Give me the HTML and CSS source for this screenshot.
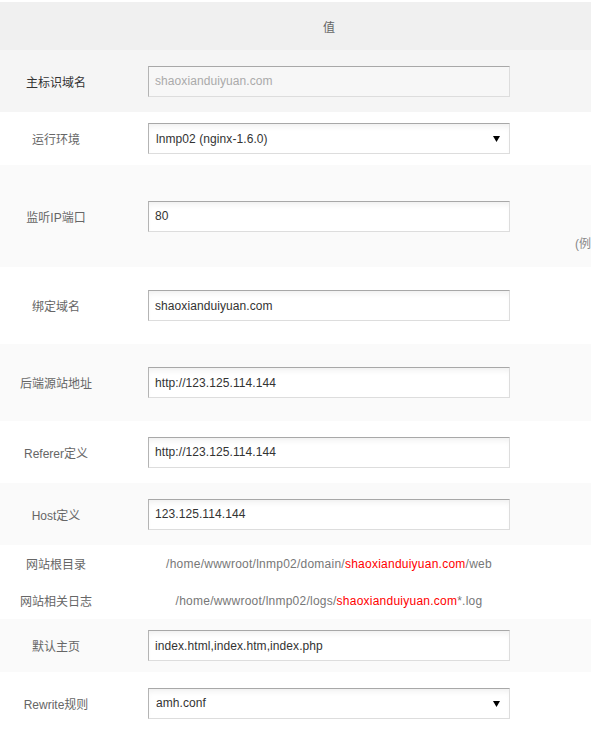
FILE: index.html
```html
<!DOCTYPE html>
<html lang="zh-CN">
<head>
<meta charset="utf-8">
<title>站点配置</title>
<link rel="stylesheet" href="styles.css">
</head>
<body>
<table class="conf">
  <colgroup>
    <col class="c-name">
    <col class="c-val">
    <col class="c-note">
  </colgroup>
  <thead>
    <tr class="head">
      <th></th>
      <th>值</th>
      <th></th>
    </tr>
  </thead>
  <tbody>
    <tr class="h62 bg-main">
      <td class="name strong">主标识域名</td>
      <td class="val"><input class="field field-off" type="text" value="shaoxianduiyuan.com" readonly></td>
      <td class="note"></td>
    </tr>
    <tr class="h53">
      <td class="name">运行环境</td>
      <td class="val">
        <span class="sel">
          <select class="field field-sel"><option>lnmp02 (nginx-1.6.0)</option></select>
          <svg class="arrow" width="7" height="6" viewBox="0 0 7 6"><path d="M0 0H7L3.5 6Z" fill="#000"/></svg>
        </span>
      </td>
      <td class="note"></td>
    </tr>
    <tr class="h102 bg-alt">
      <td class="name">监听IP端口</td>
      <td class="val"><input class="field" type="text" value="80"></td>
      <td class="note note-low">(例</td>
    </tr>
    <tr class="h77">
      <td class="name">绑定域名</td>
      <td class="val"><input class="field" type="text" value="shaoxianduiyuan.com"></td>
      <td class="note"></td>
    </tr>
    <tr class="h77 bg-alt">
      <td class="name">后端源站地址</td>
      <td class="val"><input class="field" type="text" value="http://123.125.114.144"></td>
      <td class="note"></td>
    </tr>
    <tr class="h62">
      <td class="name">Referer定义</td>
      <td class="val"><input class="field" type="text" value="http://123.125.114.144"></td>
      <td class="note"></td>
    </tr>
    <tr class="h62 bg-alt">
      <td class="name">Host定义</td>
      <td class="val"><input class="field" type="text" value="123.125.114.144"></td>
      <td class="note"></td>
    </tr>
    <tr class="h37">
      <td class="name">网站根目录</td>
      <td class="val path">/home/wwwroot/lnmp02/domain/<span class="hl">shaoxianduiyuan.com</span>/web</td>
      <td class="note"></td>
    </tr>
    <tr class="h37">
      <td class="name">网站相关日志</td>
      <td class="val path">/home/wwwroot/lnmp02/logs/<span class="hl">shaoxianduiyuan.com</span>*.log</td>
      <td class="note"></td>
    </tr>
    <tr class="h53 bg-alt">
      <td class="name">默认主页</td>
      <td class="val"><input class="field" type="text" value="index.html,index.htm,index.php"></td>
      <td class="note"></td>
    </tr>
    <tr class="h62">
      <td class="name">Rewrite规则</td>
      <td class="val">
        <span class="sel">
          <select class="field field-sel"><option>amh.conf</option></select>
          <svg class="arrow" width="7" height="6" viewBox="0 0 7 6"><path d="M0 0H7L3.5 6Z" fill="#000"/></svg>
        </span>
      </td>
      <td class="note"></td>
    </tr>
  </tbody>
</table>
</body>
</html>
```

FILE: styles.css
```css
html, body {
  margin: 0;
  padding: 0;
  background: #fff;
  overflow: hidden;
}

body {
  font-family: "Liberation Sans", Arial, "Noto Sans CJK SC", sans-serif;
  font-size: 12px;
  color: #666;
}

.conf {
  margin-top: 2px;
  width: 760px;
  table-layout: fixed;
  border-collapse: collapse;
  border-spacing: 0;
}

.c-name { width: 112px; }
.c-val { width: 434px; }
.c-note { width: 214px; }

.conf th,
.conf td {
  padding: 0;
  text-align: center;
  vertical-align: middle;
}

.head {
  height: 48px;
  background: #f0f0f0;
}

.head th {
  font-weight: normal;
  color: #666;
}

.bg-main { background: #f5f5f5; }
.bg-alt { background: #fafafa; }

.h37 { height: 37px; }
.h53 { height: 53px; }
.h62 { height: 62px; }
.h77 { height: 77px; }
.h102 { height: 102px; }

.name {
  color: #666;
  white-space: nowrap;
}

.name.strong {
  color: #333;
}

.val {
  font-size: 0;
}

.field {
  box-sizing: border-box;
  width: 362px;
  height: 31px;
  margin: 0;
  padding: 0 6px;
  border: 1px solid #ddd;
  border-top-color: #a8a8a8;
  border-left-color: #b4b4b4;
  border-radius: 0;
  background: #fff;
  box-shadow: inset 0 5px 6px -3px rgba(0, 0, 0, 0.07);
  font-family: "Liberation Sans", Arial, "Noto Sans CJK SC", sans-serif;
  font-size: 12px;
  letter-spacing: 0.08px;
  color: #333;
  outline: none;
  vertical-align: middle;
}

.field-off {
  background: #f7f7f7;
  color: #aaa;
  box-shadow: none;
}

.sel {
  position: relative;
  display: inline-block;
  vertical-align: middle;
}

.field-sel {
  display: block;
  -webkit-appearance: none;
  appearance: none;
  padding-left: 7px;
}

.arrow {
  position: absolute;
  right: 10px;
  top: 13px;
  display: block;
}

.path {
  font-size: 12px;
  letter-spacing: 0.24px;
  color: #777;
  white-space: nowrap;
}

.hl {
  color: #f00;
}

.note {
  color: #888;
}

.conf td.note-low {
  vertical-align: top;
  text-align: left;
  padding: 70px 0 0 29px;
  line-height: 19px;
  white-space: nowrap;
}
```
